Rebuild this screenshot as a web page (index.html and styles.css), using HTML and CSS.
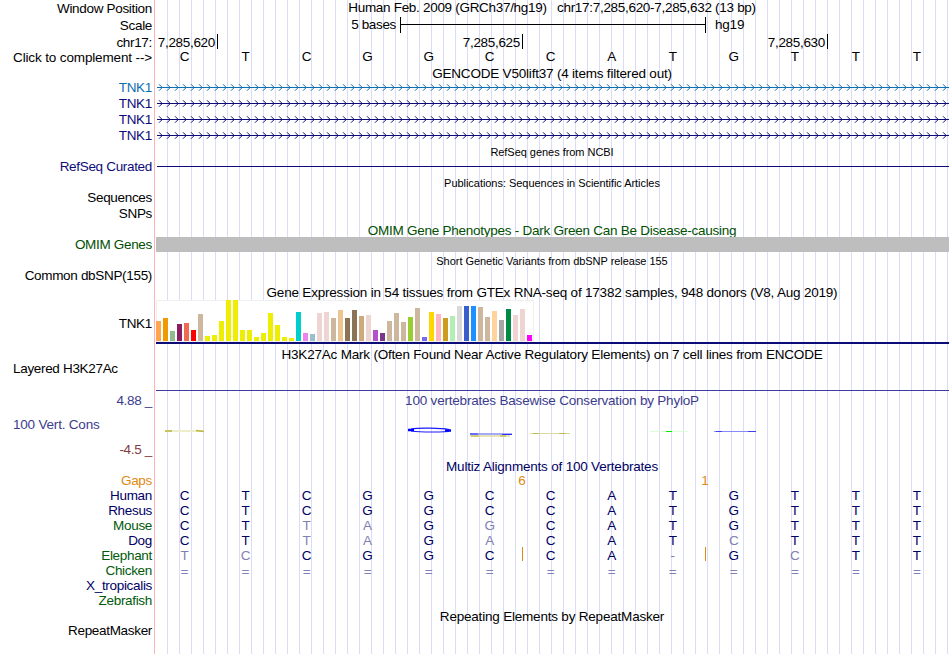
FILE: index.html
```
<!DOCTYPE html>
<html lang="en">
<head>
  <meta charset="UTF-8" />
  <title>chr17:7,285,620-7,285,632</title>
  <link rel="stylesheet" href="styles.css">
</head>
<body>
  <div id="browser">
    <div class="row position"><div class="label">Window Position</div><div class="track title">Human Feb. 2009 (GRCh37/hg19) &nbsp; chr17:7,285,620-7,285,632 (13 bp)</div></div>
    <div class="row scale-row">
      <div class="label">Scale</div>
      <div class="track scale"><span class="bases">5 bases</span><span class="bar"></span><span>hg19</span></div>
    </div>
    <div class="row ruler-row">
      <div class="label">chr17:</div>
      <div class="track ruler"><span>7,285,620</span><span>7,285,625</span><span>7,285,630</span></div>
    </div>
    <div class="row base-row"><div class="label">Click to complement --&gt;</div><div class="track bases-line" data-seq="CTCGGCCATGTTT"></div></div>

    <div class="row t14"><div class="label"></div><div class="track title">GENCODE V50lift37 (4 items filtered out)</div></div>
    <div class="row gene lightblue"><div class="label">TNK1</div><div class="track"></div></div>
    <div class="row gene navy"><div class="label">TNK1</div><div class="track"></div></div>
    <div class="row gene navy"><div class="label">TNK1</div><div class="track"></div></div>
    <div class="row gene navy"><div class="label">TNK1</div><div class="track"></div></div>

    <div class="row small"><div class="label"></div><div class="track title">RefSeq genes from NCBI</div></div>
    <div class="row navy refseq"><div class="label">RefSeq Curated</div><div class="track"><div class="intron"></div></div></div>

    <div class="row small t15 pubs"><div class="label"></div><div class="track title">Publications: Sequences in Scientific Articles</div></div>
    <div class="row pub-item"><div class="label">Sequences</div><div class="track"></div></div>
    <div class="row pub-item"><div class="label">SNPs</div><div class="track"></div></div>

    <div class="row t15 green"><div class="label"></div><div class="track title omim-title">OMIM Gene Phenotypes - Dark Green Can Be Disease-causing</div></div>
    <div class="row t15 green omim"><div class="label">OMIM Genes</div><div class="track"><div class="block"></div></div></div>

    <div class="row small t17"><div class="label"></div><div class="track title">Short Genetic Variants from dbSNP release 155</div></div>
    <div class="row t15 dbsnp"><div class="label">Common dbSNP(155)</div><div class="track"></div></div>

    <div class="row"><div class="label"></div><div class="track title">Gene Expression in 54 tissues from GTEx RNA-seq of 17382 samples, 948 donors (V8, Aug 2019)</div></div>
    <div class="row gtex-row">
      <div class="label">TNK1</div>
      <div class="track gtex"><div id="gtex"></div><div class="gene-model"></div></div>
    </div>

    <div class="row"><div class="label"></div><div class="track title h3k">H3K27Ac Mark (Often Found Near Active Regulatory Elements) on 7 cell lines from ENCODE</div></div>
    <div class="row layered"><div class="label left">Layered H3K27Ac</div><div class="track"></div></div>

    <div class="row phylo"><div class="label">4.88 _</div><div class="track title">100 vertebrates Basewise Conservation by PhyloP</div></div>
    <div class="row cons phylo">
      <div class="label"><div class="name">100 Vert. Cons</div><div class="min">-4.5 _</div></div>
      <div class="track">
        <svg width="795" height="50" viewBox="155 408 795 50">
          <path d="M165 431h39" stroke="#eeeecc" stroke-width="2"/>
          <path d="M165 431h7M196 430.5l8 1" stroke="#b9b93e" stroke-width="1.6"/>
          <path d="M411 429c8-1.5 30-1 38 .5M411 431c8 1 28 1 38 .5" fill="none" stroke="#1a1aff" stroke-width="1.2"/>
          <path d="M408 430h6M445 430.5h6" stroke="#00f" stroke-width="2.4"/>
          <path d="M470 434h42" stroke="#8c8cf6" stroke-width="1.6"/>
          <path d="M470 434h8M502 434.5h10" stroke="#3030ff" stroke-width="1.2"/>
          <path d="M470 436h40" stroke="#dcdc9c" stroke-width="1.6"/>
          <path d="M471 436h8M500 436h6" stroke="#b9b93e" stroke-width="1.2"/>
          <path d="M530 433.5h40" stroke="#d9d9a0"/>
          <path d="M533 433.5h6M559 433.5h7" stroke="#bcbc58"/>
          <path d="M650 431.5h38" stroke="#d8ffd8"/>
          <path d="M666 431.5h6" stroke="#00ee00"/>
          <path d="M714 431.5h42" stroke="#8a8af8"/>
          <path d="M716 431.5h6M748 431.5h8" stroke="#4040f0"/>
        </svg>
      </div>
    </div>

    <div class="row t15 align"><div class="label"></div><div class="track title">Multiz Alignments of 100 Vertebrates</div></div>
    <div class="row t15 gaps"><div class="label">Gaps</div><div class="track"><span>6</span><span>1</span></div></div>
    <div id="multiz"></div>

    <div class="row"><div class="label"></div><div class="track title">Repeating Elements by RepeatMasker</div></div>
    <div class="row t14 rmsk"><div class="label">RepeatMasker</div><div class="track"></div></div>
  </div>

  <script>
    // lower case = differs from the reference base
    const species = [
      ["Human", "CTCGGCCATGTTT"],
      ["Rhesus", "CTCGGCCATGTTT"],
      ["Mouse", "CTtaGgCATGTTT"],
      ["Dog", "CTtaGaCATcTTT"],
      ["Elephant", "tcCGGCCA-GcTT"],
      ["Chicken", "============="],
      ["X_tropicalis", ""],
      ["Zebrafish", ""]
    ];
    const greens = ["Mouse", "Elephant", "Chicken", "Zebrafish"];

    function letters(seq) {
      return seq.split("").map(c => {
        const cls = /[a-z=-]/.test(c) ? (c === "=" ? "dim eq" : "dim") : "";
        return `<span class="${cls}">${c.toUpperCase()}</span>`;
      }).join("");
    }

    document.querySelectorAll("[data-seq]").forEach(el => {
      el.innerHTML = letters(el.dataset.seq);
    });

    document.getElementById("multiz").innerHTML = species.map(([name, seq]) => `
      <div class="row t15 align ${name.toLowerCase()}">
        <div class="label ${greens.includes(name) ? "green" : ""}">${name}</div>
        <div class="track bases-line">${letters(seq)}${name === "Elephant" ? '<i class="insert one"></i><i class="insert two"></i>' : ""}</div>
      </div>`).join("");

    // direction arrows, one every 8px
    document.querySelectorAll(".gene .track").forEach(el => {
      let d = "";
      for (let x = 4; x < 793; x += 8) d += `M${x} 5.3l3.2 3.2l-3.2 3.2`;
      el.innerHTML = `<svg width="794" height="16"><path class="line" d="M2 8.5H794"/><path class="arrows" d="${d}"/></svg>`;
    });

    const tissues = [
      [20, "#ffa54f"], [23, "#ee9a00"], [10, "#8fbc8f"], [17, "#8b1c62"], [18, "#ee6a50"], [11, "#ff0000"],
      [27, "#cdb79e"], [5, "#eeee00"], [6, "#eeee00"], [20, "#eeee00"], [41, "#eeee00"], [41, "#eeee00"],
      [11, "#eeee00"], [11, "#eeee00"], [4, "#eeee00"], [8, "#eeee00"], [28, "#eeee00"], [16, "#eeee00"],
      [4, "#eeee00"], [3, "#eeee00"], [29, "#00cdcd"], [8, "#ee82ee"], [7, "#9ac0cd"], [28, "#eed5d2"],
      [29, "#eed5d2"], [23, "#cdb79e"], [31, "#eec591"], [23, "#8b7355"], [31, "#8b7355"], [25, "#cdaa7d"],
      [26, "#eed5d2"], [11, "#b452cd"], [8, "#7a378b"], [20, "#cdb79e"], [28, "#cdb79e"], [19, "#cdb79e"],
      [24, "#9acd32"], [33, "#cdb79e"], [4, "#7a67ee"], [29, "#ffd700"], [27, "#ffb6c1"], [23, "#cd9b1d"],
      [25, "#b4eeb4"], [35, "#d9d9d9"], [35, "#3a5fcd"], [35, "#1e90ff"], [34, "#cdb79e"], [24, "#cdb79e"],
      [30, "#ffd39b"], [21, "#a6a6a6"], [32, "#008b45"], [26, "#eed5d2"], [32, "#eed5d2"], [6, "#ff00ff"]
    ];
    document.getElementById("gtex").innerHTML = tissues.map(([h, c]) =>
      `<span style="height:${h}px;background:${c}"></span>`).join("");
  </script>
</body>
</html>
```
FILE: styles.css
```
body {
  margin: 0;
  background: #fff;
  color: #000;
  font-family: "Liberation Sans", Arial, sans-serif;
  font-size: 13.5px;
  letter-spacing: -.2px;
  overflow: hidden;
}
#browser {
  width: 950px;
  height: 654px;
  background:
    linear-gradient(#ffb4b4, #ffb4b4) 154px 0 / 1px 100% no-repeat,
    repeating-linear-gradient(to right, #dcdcf8 0, #dcdcf8 1px, transparent 1px, transparent 12px) 167px 0 / 783px 100% no-repeat;
}
.row {
  display: flex;
  height: 16px;
  line-height: 18px;
  white-space: nowrap;
}
.label {
  box-sizing: border-box;
  width: 155px;
  padding-right: 3px;
  flex: none;
  text-align: right;
  letter-spacing: -.32px;
}
.label.left {
  text-align: left;
  padding-left: 13px;
}
.track {
  width: 795px;
  flex: none;
}
.title {
  width: 794px;
  text-align: center;
}
.position .title {
  line-height: 16px;
  letter-spacing: -.3px;
}
.t14 { height: 14px; }
.t15 { height: 15px; line-height: 16px; }
.t17 { height: 17px; line-height: 17px; }
.small {
  font-size: 11px;
  letter-spacing: -.04px;
}
.small .title { line-height: 18px; }
.pubs .title { line-height: 16px; }
.dbsnp { line-height: 14px; }
.rmsk { line-height: 14px; }
.refseq, .omim, .pub-item { line-height: 16px; }
.omim-title {
  line-height: 18px;
  letter-spacing: -.25px;
}
.navy { color: #0c0c78; }
.lightblue { color: #0c6eb0; }
.green { color: #005000; }
svg { display: block; }

.scale-row { height: 18px; line-height: 18px; }
.scale-row .label { line-height: 19px; }
.scale { display: flex; }
.bases {
  width: 241px;
  margin-right: 4px;
  text-align: right;
  letter-spacing: -.35px;
}
.bar {
  box-sizing: border-box;
  width: 306px;
  height: 16px;
  margin: 1px 9px 0 0;
  border: solid #000;
  border-width: 0 1px;
  background: linear-gradient(#000, #000) 0 7px / 100% 1px no-repeat;
}
.ruler-row { height: 17px; line-height: 17px; }
.ruler { display: flex; }
.ruler span {
  box-sizing: border-box;
  width: 305px;
  height: 15px;
  padding-right: 2px;
  border-right: 1px solid #000;
  text-align: right;
  letter-spacing: -.32px;
}
.ruler span:first-child { width: 63px; }
.base-row { height: 14px; line-height: 14px; }
.base-row .label { letter-spacing: -.14px; }
.base-row .bases-line { line-height: 12px; }
.bases-line {
  position: relative;
  left: -1px;
  display: grid;
  grid-template-columns: repeat(13, 61.04px);
  text-align: center;
  letter-spacing: 0;
}

.gene .line { stroke: currentColor; }
.gene .arrows { fill: none; stroke: currentColor; stroke-width: 1; }
.intron {
  height: 1px;
  margin: 7px 1px 0 2px;
  background: #0c0c78;
}
.omim .block {
  height: 15px;
  margin: 0 1px;
  background: #bebebe;
}

.gtex-row { height: 46px; line-height: 48px; }
#gtex {
  box-sizing: border-box;
  display: flex;
  align-items: flex-end;
  gap: 2px;
  width: 378px;
  height: 42px;
  margin-left: 1px;
  background: #fff;
  box-shadow: inset 0 0 0 1px #f0f0f0;
  padding-bottom: 1px;
}
#gtex span { width: 5px; }
.gene-model {
  height: 2px;
  margin: 0 1px;
  background: #0c0c78;
}
.layered { height: 30px; line-height: 14px; }
.layered .track {
  box-sizing: border-box;
  width: 793px;
  height: 29px;
  margin-left: 1px;
  border-bottom: 1px solid #3c3ca0;
}
.phylo { color: #3c3c8c; }
.cons { height: 50px; line-height: 16px; }
.cons .name {
  margin-top: 9px;
  padding-left: 13px;
  text-align: left;
  letter-spacing: -.2px;
}
.cons .min {
  margin-top: 9px;
  color: #823c3c;
}

.align { color: #000064; }
.align .title { line-height: 17px; }
.align .green { color: #005a0a; }
.dim { color: #8080b2; }
.eq { line-height: 18px; }
.gaps { color: #e08a10; }
.gaps .track { display: flex; }
.gaps span {
  width: 8px;
  margin-left: 175px;
  text-align: center;
}
.gaps span:first-child { margin-left: 363px; }
.insert {
  position: absolute;
  top: -1px;
  width: 1px;
  height: 14px;
  background: #e08a10;
}
.insert.one { left: 368px; }
.insert.two { left: 551px; }
```
